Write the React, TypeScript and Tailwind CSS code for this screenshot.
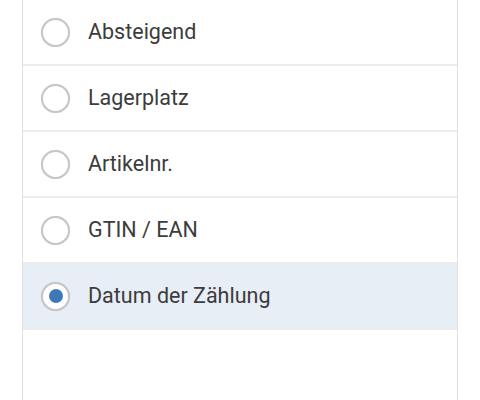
import React, { useState } from 'react';

const options = ['Absteigend', 'Lagerplatz', 'Artikelnr.', 'GTIN / EAN', 'Datum der Zählung'];

export default function App() {
    const [selected, setSelected] = useState('Datum der Zählung');

    return (
        <div className="w-[480px] h-[400px] bg-white overflow-hidden" style={{ fontFamily: 'Roboto, "Noto Sans", sans-serif' }}>
            <div className="mx-[22px] h-full border-x border-[#e0e0e0] flex flex-col">
                {options.map((opt) => {
                    const active = opt === selected;
                    return (
                        <button
                            key={opt}
                            onClick={() => setSelected(opt)}
                            className={`h-[66px] shrink-0 flex items-center gap-[18px] pl-[18px] border-b-2 border-[#ececec] text-left ${active ? 'bg-[#e8eef6]' : 'bg-white'}`}
                        >
                            <span className="w-[29px] h-[29px] rounded-full border-2 border-[#c6c6c6] bg-white flex items-center justify-center shadow-[0_0_1px_rgba(0,0,0,0.15)]">
                                {active && <span className="w-[14px] h-[14px] rounded-full bg-[#3d7ab4]" />}
                            </span>
                            <span className="text-[21.5px] text-[#3c3c3c]">{opt}</span>
                        </button>
                    );
                })}
            </div>
        </div>
    );
}
